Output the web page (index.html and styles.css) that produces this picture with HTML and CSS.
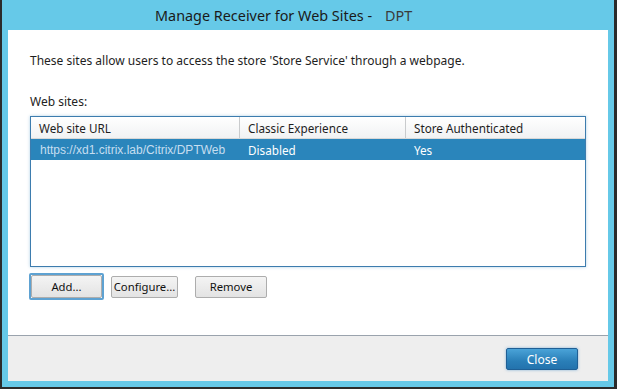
FILE: index.html
```html
<!DOCTYPE html>
<html lang="en">
<head>
    <title>Manage Receiver for Web Sites</title>
    <link rel="stylesheet" href="styles.css">
</head>
<body>
    <div class="window">
        <div class="titlebar">
            <span class="title">Manage Receiver for Web Sites -</span>
            <span class="store-name">DPT</span>
        </div>
        <div class="content">
            <div class="main">
                <p class="intro">These sites allow users to access the store 'Store Service' through a webpage.</p>
                <p class="label">Web sites:</p>
                <div class="grid">
                    <div class="grid-row grid-head">
                        <div class="cell col-url">Web site URL</div>
                        <div class="cell col-classic">Classic Experience</div>
                        <div class="cell col-auth">Store Authenticated</div>
                    </div>
                    <div class="grid-row selected">
                        <div class="cell col-url url">https://xd1.citrix.lab/Citrix/DPTWeb</div>
                        <div class="cell col-classic">Disabled</div>
                        <div class="cell col-auth">Yes</div>
                    </div>
                </div>
                <div class="actions">
                    <div class="focus-ring"><button class="btn btn-add">Add...</button></div>
                    <button class="btn btn-configure">Configure...</button>
                    <button class="btn btn-remove">Remove</button>
                </div>
            </div>
            <div class="footer">
                <button class="btn-primary">Close</button>
            </div>
        </div>
    </div>
</body>
</html>
```

FILE: styles.css
```css
/* dialog window */
body {
    margin: 0;
    background-color: #2b2b2b;
    font-family: "Segoe UI", "Noto Sans", sans-serif;
    font-size: 12px;
    color: #1e1e1e;
}

.window {
    margin: 0 3px 2px 2px;
    height: 387px;
    background-color: #66c9e8;
    padding: 0 6px 6px 6px;
    box-sizing: border-box;
    display: flex;
    flex-direction: column;
}

.titlebar {
    height: 30px;
    display: flex;
    align-items: center;
    padding-left: 147px;
    font-size: 14.4px;
    color: #1a1a1a;
}

.store-name {
    margin-left: 13px;
    color: #3a3a3a;
}

.content {
    flex: 1;
    display: flex;
    flex-direction: column;
    background: white;
}

.main {
    flex: 1;
    padding: 23px 22px 0 22px;
}

.intro {
    margin: 0;
    line-height: 16px;
}

.label {
    margin: 25px 0 0 0;
    line-height: 16px;
    color: #222;
}

/* list view */
.grid {
    margin-top: 6px;
    width: 556px;
    height: 151px;
    box-sizing: border-box;
    border: 1px solid #3d7cae;
    box-shadow: 0 0 3px rgba(80, 150, 200, 0.45);
    font-size: 11.7px;
}

.grid-row {
    display: flex;
    height: 21px;
    align-items: center;
}

.grid-head {
    background: linear-gradient(#ffffff, #f1f2f3);
    border-bottom: 1px solid #d8d8d8;
}

.cell {
    box-sizing: border-box;
    height: 100%;
    display: flex;
    align-items: center;
    padding-left: 8px;
    white-space: nowrap;
    overflow: hidden;
}

.col-url {
    width: 209px;
}

.col-classic {
    width: 166px;
}

.col-auth {
    flex: 1;
}

.grid-head .col-url,
.grid-head .col-classic {
    border-right: 1px solid #c9cbcd;
}

.selected {
    background-color: #2a85bb;
    color: white;
}

.url {
    font-family: "Liberation Sans", Arial, sans-serif;
    font-size: 12px;
    color: #c6def0;
    padding-left: 9px;
}

/* buttons */
.actions {
    margin-top: 6px;
    display: flex;
    align-items: center;
}

.btn {
    height: 22px;
    font-family: inherit;
    font-size: 11.3px;
    color: #111;
    background: linear-gradient(#f4f4f4, #e3e3e3);
    border: 1px solid #adadad;
    border-radius: 2px;
    padding: 0;
}

.focus-ring {
    border: 2px solid #5ea2d2;
    border-radius: 2px;
    margin-left: -1px;
}

.btn-add {
    display: block;
    width: 71px;
    height: 23px;
}

.btn-configure {
    width: 67px;
    margin-left: 7px;
}

.btn-remove {
    width: 72px;
    margin-left: 17px;
}

.footer {
    height: 46px;
    border-top: 1px solid #9aa3ad;
    background-color: #eeeeee;
    display: flex;
    justify-content: flex-end;
    align-items: flex-start;
    padding: 12px 30px 0 0;
    box-sizing: border-box;
}

.btn-primary {
    width: 72px;
    height: 22px;
    font-family: inherit;
    font-size: 12px;
    color: white;
    background: linear-gradient(#4aa3d8, #2a7fb8 60%, #2373ad);
    border: 1px solid #1f5f95;
    border-radius: 2px;
    box-shadow: 0 0 3px rgba(60, 140, 200, 0.6);
    padding: 0;
}
```
